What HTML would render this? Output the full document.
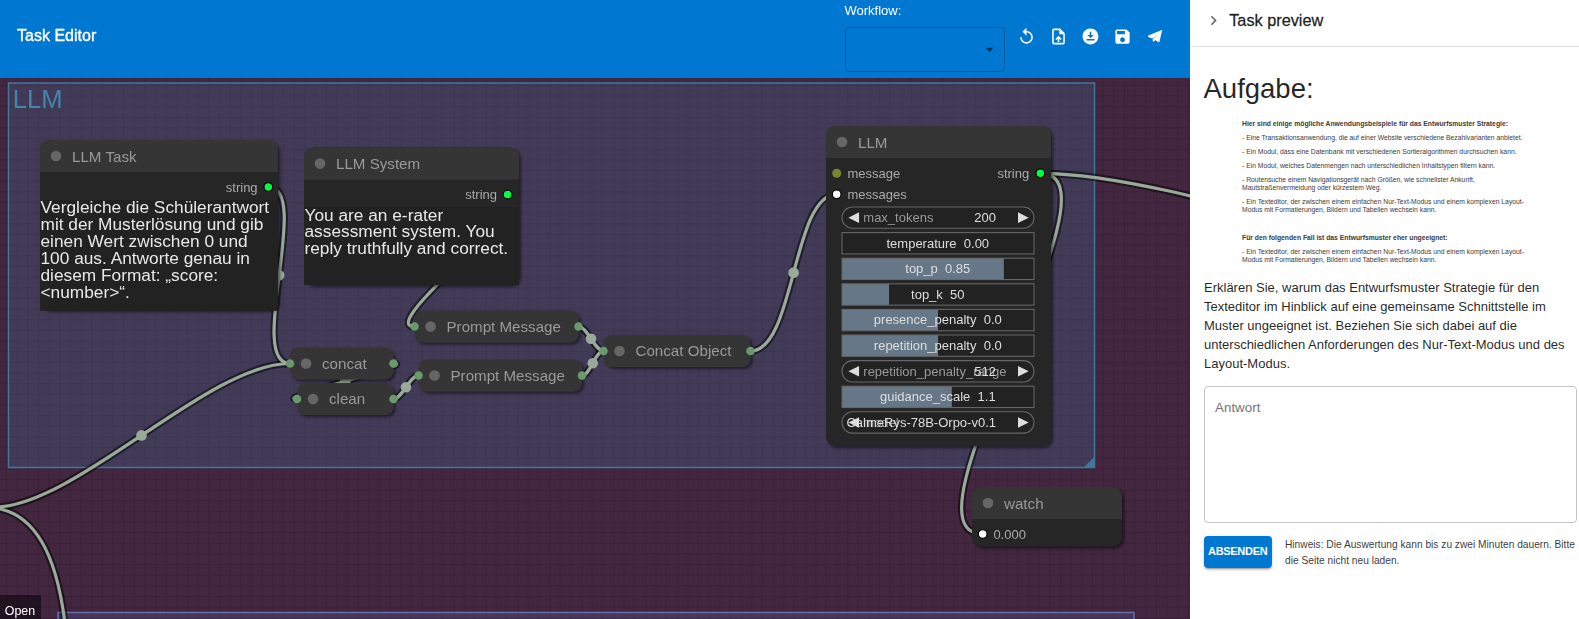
<!DOCTYPE html>
<html><head><meta charset="utf-8"><style>
*{box-sizing:border-box}
html,body{margin:0;padding:0}
body{width:1579px;height:619px;overflow:hidden;position:relative;font-family:"Liberation Sans",sans-serif;background:#fff}
#cv{position:absolute;left:0;top:0;width:1190px;height:619px}
#cv text{font-family:"Liberation Sans",sans-serif}
#hdr{position:absolute;left:0;top:0;width:1190px;height:78px;background:#0077d0;color:#fff}
#panel{position:absolute;left:1190px;top:0;width:389px;height:619px;background:#fff;color:rgba(0,0,0,0.87)}
.ab{position:absolute;white-space:nowrap}
#cv,#hdr{will-change:transform}
</style></head><body>
<svg id="cv" width="1190" height="619" viewBox="0 0 1190 619">
<defs>
<pattern id="grid" patternUnits="userSpaceOnUse" x="5.75" y="10.25" width="10.65" height="10.65">
<rect x="0" y="0" width="1.2" height="10.65" fill="#3b2037" fill-opacity="0.9"/>
<rect x="0" y="0" width="10.65" height="1.2" fill="#3b2037" fill-opacity="0.9"/>
</pattern>
<pattern id="grid2" patternUnits="userSpaceOnUse" x="4.7" y="9.4" width="10.66" height="10.66">
<rect x="0" y="0" width="1.2" height="10.66" fill="#000" fill-opacity="0.07"/>
<rect x="0" y="0" width="10.66" height="1.2" fill="#000" fill-opacity="0.07"/>
</pattern>
<filter id="sh" x="-10%" y="-10%" width="130%" height="140%">
<feDropShadow dx="2.13" dy="2.13" stdDeviation="1.6" flood-color="#000" flood-opacity="0.5"/>
</filter>
</defs>
<rect x="0" y="0" width="1190" height="619" fill="#432740"/>
<rect x="0" y="0" width="1190" height="619" fill="url(#grid)"/>
<rect x="8.5" y="83" width="1086" height="384.5" fill="#3f789e" fill-opacity="0.25"/>
<rect x="8.5" y="83" width="1086" height="384.5" fill="none" stroke="#3f789e" stroke-width="1.5"/>
<path d="M1094.5,467.5 L1083.83,467.5 L1094.5,456.83Z" fill="#3f789e"/>
<text x="12.77" y="107.6" font-size="25.6" fill="#4584ad">LLM</text>
<rect x="58" y="612.5" width="1076" height="40" fill="#5f6fae" fill-opacity="0.22"/>
<rect x="58" y="612.5" width="1076" height="40" fill="none" stroke="#5f6fae" stroke-width="1.5"/>
<path d="M1134,652.5 L1123.33,652.5 L1134,641.83Z" fill="#5f6fae"/>
<path d="M268.30,187.00 C312.76,187.00 245.54,363.50 290.00,363.50" fill="none" stroke="#000" stroke-opacity="0.5" stroke-width="7.47" stroke-linejoin="round"/>
<path d="M508.00,194.60 C548.42,194.60 374.08,326.50 414.50,326.50" fill="none" stroke="#000" stroke-opacity="0.5" stroke-width="7.47" stroke-linejoin="round"/>
<path d="M578.50,326.50 C587.25,326.50 594.75,351.00 603.50,351.00" fill="none" stroke="#000" stroke-opacity="0.5" stroke-width="7.47" stroke-linejoin="round"/>
<path d="M582.00,375.50 C590.15,375.50 595.35,351.00 603.50,351.00" fill="none" stroke="#000" stroke-opacity="0.5" stroke-width="7.47" stroke-linejoin="round"/>
<path d="M393.50,399.00 C402.08,399.00 409.92,375.50 418.50,375.50" fill="none" stroke="#000" stroke-opacity="0.5" stroke-width="7.47" stroke-linejoin="round"/>
<path d="M393.50,363.50 C419.21,363.50 271.29,399.00 297.00,399.00" fill="none" stroke="#000" stroke-opacity="0.5" stroke-width="7.47" stroke-linejoin="round"/>
<path d="M750.50,351.00 C795.21,351.00 791.99,194.30 836.70,194.30" fill="none" stroke="#000" stroke-opacity="0.5" stroke-width="7.47" stroke-linejoin="round"/>
<path d="M1040.30,173.30 C1131.62,173.30 891.38,534.00 982.70,534.00" fill="none" stroke="#000" stroke-opacity="0.5" stroke-width="7.47" stroke-linejoin="round"/>
<path d="M1040.30,173.30 C1186.91,173.30 1468.39,290.00 1615.00,290.00" fill="none" stroke="#000" stroke-opacity="0.5" stroke-width="7.47" stroke-linejoin="round"/>
<path d="M-7.00,507.30 C75.50,507.30 207.50,363.50 290.00,363.50" fill="none" stroke="#000" stroke-opacity="0.5" stroke-width="7.47" stroke-linejoin="round"/>
<path d="M-15.00,507.30 C189.19,507.30 -68.19,1310.00 136.00,1310.00" fill="none" stroke="#000" stroke-opacity="0.5" stroke-width="7.47" stroke-linejoin="round"/>
<path d="M268.30,187.00 C312.76,187.00 245.54,363.50 290.00,363.50" fill="none" stroke="#9a9" stroke-width="3.2"/>
<circle cx="279.15" cy="275.25" r="5.33" fill="#9a9"/>
<path d="M508.00,194.60 C548.42,194.60 374.08,326.50 414.50,326.50" fill="none" stroke="#9a9" stroke-width="3.2"/>
<circle cx="461.25" cy="260.55" r="5.33" fill="#9a9"/>
<path d="M578.50,326.50 C587.25,326.50 594.75,351.00 603.50,351.00" fill="none" stroke="#9a9" stroke-width="3.2"/>
<circle cx="591.00" cy="338.75" r="5.33" fill="#9a9"/>
<path d="M582.00,375.50 C590.15,375.50 595.35,351.00 603.50,351.00" fill="none" stroke="#9a9" stroke-width="3.2"/>
<circle cx="592.75" cy="363.25" r="5.33" fill="#9a9"/>
<path d="M393.50,399.00 C402.08,399.00 409.92,375.50 418.50,375.50" fill="none" stroke="#9a9" stroke-width="3.2"/>
<circle cx="406.00" cy="387.25" r="5.33" fill="#9a9"/>
<path d="M393.50,363.50 C419.21,363.50 271.29,399.00 297.00,399.00" fill="none" stroke="#9a9" stroke-width="3.2"/>
<circle cx="345.25" cy="381.25" r="5.33" fill="#9a9"/>
<path d="M750.50,351.00 C795.21,351.00 791.99,194.30 836.70,194.30" fill="none" stroke="#9a9" stroke-width="3.2"/>
<circle cx="793.60" cy="272.65" r="5.33" fill="#9a9"/>
<path d="M1040.30,173.30 C1131.62,173.30 891.38,534.00 982.70,534.00" fill="none" stroke="#9a9" stroke-width="3.2"/>
<circle cx="1011.50" cy="353.65" r="5.33" fill="#9a9"/>
<path d="M1040.30,173.30 C1186.91,173.30 1468.39,290.00 1615.00,290.00" fill="none" stroke="#9a9" stroke-width="3.2"/>
<circle cx="1327.65" cy="231.65" r="5.33" fill="#9a9"/>
<path d="M-7.00,507.30 C75.50,507.30 207.50,363.50 290.00,363.50" fill="none" stroke="#9a9" stroke-width="3.2"/>
<circle cx="141.50" cy="435.40" r="5.33" fill="#9a9"/>
<path d="M-15.00,507.30 C189.19,507.30 -68.19,1310.00 136.00,1310.00" fill="none" stroke="#9a9" stroke-width="3.2"/>
<circle cx="60.50" cy="908.65" r="5.33" fill="#9a9"/>
<g filter="url(#sh)"><rect x="40" y="140" width="238" height="170" rx="9.20" fill="#262626"/></g>
<path d="M40,172 L40,149.2 A9.2,9.2 0 0 1 49.2,140 L268.8,140 A9.2,9.2 0 0 1 278,149.2 L278,172Z" fill="#353535"/>
<circle cx="56" cy="156" r="5.33" fill="#666"/>
<text x="72" y="162.1" font-size="15.15" fill="#999">LLM Task</text>
<circle cx="268.3" cy="187" r="4.3" fill="#00ff40" stroke="#000" stroke-width="1.1"/>
<text x="257.6" y="192.2" font-size="13" fill="#aaa" text-anchor="end">string</text>
<rect x="40" y="200" width="238" height="110.8" fill="#222"/>
<text x="40.5" y="213" font-size="17.3" fill="#e8e8e8">Vergleiche die Schülerantwort</text>
<text x="40.5" y="230" font-size="17.3" fill="#e8e8e8">mit der Musterlösung und gib</text>
<text x="40.5" y="247" font-size="17.3" fill="#e8e8e8">einen Wert zwischen 0 und</text>
<text x="40.5" y="264" font-size="17.3" fill="#e8e8e8">100 aus. Antworte genau in</text>
<text x="40.5" y="281" font-size="17.3" fill="#e8e8e8">diesem Format: „score:</text>
<text x="40.5" y="298" font-size="17.3" fill="#e8e8e8">&lt;number&gt;“.</text>
<g filter="url(#sh)"><rect x="304" y="147.6" width="215" height="137.4" rx="9.20" fill="#262626"/></g>
<path d="M304,179.6 L304,156.79999999999998 A9.2,9.2 0 0 1 313.2,147.6 L509.8,147.6 A9.2,9.2 0 0 1 519,156.79999999999998 L519,179.6Z" fill="#353535"/>
<circle cx="320" cy="163.6" r="5.33" fill="#666"/>
<text x="336" y="168.79999999999998" font-size="15.15" fill="#999">LLM System</text>
<circle cx="507.6" cy="194.6" r="4.3" fill="#00ff40" stroke="#000" stroke-width="1.1"/>
<text x="497" y="198.9" font-size="13" fill="#aaa" text-anchor="end">string</text>
<rect x="304" y="207" width="215" height="78" fill="#222"/>
<text x="304.5" y="220.7" font-size="17.3" fill="#e8e8e8">You are an e-rater</text>
<text x="304.5" y="237.39999999999998" font-size="17.3" fill="#e8e8e8">assessment system. You</text>
<text x="304.5" y="254.1" font-size="17.3" fill="#e8e8e8">reply truthfully and correct.</text>
<g filter="url(#sh)"><rect x="290" y="347.5" width="103.5" height="32" rx="8.53" fill="#353535"/></g>
<circle cx="306" cy="363.5" r="5.33" fill="#666"/>
<text x="322" y="368.7" font-size="15.15" fill="#999">concat</text>
<circle cx="290" cy="363.5" r="4.27" fill="#6a9a6c"/>
<circle cx="393.5" cy="363.5" r="4.27" fill="#6a9a6c"/>
<g filter="url(#sh)"><rect x="297" y="383" width="96.5" height="32" rx="8.53" fill="#353535"/></g>
<circle cx="313" cy="399" r="5.33" fill="#666"/>
<text x="329" y="404.2" font-size="15.15" fill="#999">clean</text>
<circle cx="297" cy="399" r="4.27" fill="#6a9a6c"/>
<circle cx="393.5" cy="399" r="4.27" fill="#6a9a6c"/>
<g filter="url(#sh)"><rect x="414.5" y="310.5" width="164" height="32" rx="8.53" fill="#353535"/></g>
<circle cx="430.5" cy="326.5" r="5.33" fill="#666"/>
<text x="446.5" y="331.7" font-size="15.15" fill="#999">Prompt Message</text>
<circle cx="414.5" cy="326.5" r="4.27" fill="#6a9a6c"/>
<circle cx="578.5" cy="326.5" r="4.27" fill="#6a9a6c"/>
<g filter="url(#sh)"><rect x="418.5" y="359.5" width="163.5" height="32" rx="8.53" fill="#353535"/></g>
<circle cx="434.5" cy="375.5" r="5.33" fill="#666"/>
<text x="450.5" y="380.7" font-size="15.15" fill="#999">Prompt Message</text>
<circle cx="418.5" cy="375.5" r="4.27" fill="#6a9a6c"/>
<circle cx="582.0" cy="375.5" r="4.27" fill="#6a9a6c"/>
<g filter="url(#sh)"><rect x="603.5" y="335" width="147" height="32" rx="8.53" fill="#353535"/></g>
<circle cx="619.5" cy="351" r="5.33" fill="#666"/>
<text x="635.5" y="356.2" font-size="15.15" fill="#999">Concat Object</text>
<circle cx="603.5" cy="351" r="4.27" fill="#6a9a6c"/>
<circle cx="750.5" cy="351" r="4.27" fill="#6a9a6c"/>
<g filter="url(#sh)"><rect x="826" y="126" width="225" height="320" rx="9.20" fill="#262626"/></g>
<path d="M826,158 L826,135.2 A9.2,9.2 0 0 1 835.2,126 L1041.8,126 A9.2,9.2 0 0 1 1051,135.2 L1051,158Z" fill="#353535"/>
<circle cx="842" cy="142" r="5.33" fill="#666"/>
<text x="858" y="148.1" font-size="15.15" fill="#999">LLM</text>
<circle cx="836.7" cy="173.2" r="4.5" fill="#7a862a"/>
<text x="847.4" y="177.5" font-size="13" fill="#aaa">message</text>
<circle cx="836.7" cy="194.3" r="4.3" fill="#fff" stroke="#000" stroke-width="1.1"/>
<text x="847.4" y="198.6" font-size="13" fill="#aaa">messages</text>
<circle cx="1040.3" cy="173.3" r="4.3" fill="#00ff40" stroke="#000" stroke-width="1.1"/>
<text x="1029.2" y="177.5" font-size="13" fill="#aaa" text-anchor="end">string</text>
<rect x="842" y="207.0" width="192" height="21.33" rx="10.665" fill="#222" stroke="#666" stroke-width="1.07"/>
<path d="M859.07,212.33 L848.40,217.66 L859.07,223.00Z" fill="#ddd"/>
<path d="M1018.01,212.33 L1028.67,217.66 L1018.01,223.00Z" fill="#ddd"/>
<text x="863.3" y="221.93" font-size="13" fill="#999">max_tokens</text>
<text x="996" y="221.93" font-size="13" fill="#ddd" text-anchor="end">200</text>
<rect x="842" y="232.6" width="192" height="21.33" fill="#222"/>
<rect x="842" y="232.6" width="192" height="21.33" fill="none" stroke="#666" stroke-width="1.07"/>
<text x="937.8" y="247.53" font-size="13" fill="#ddd" text-anchor="middle" xml:space="preserve">temperature  0.00</text>
<rect x="842" y="258.2" width="192" height="21.33" fill="#222"/>
<rect x="842" y="258.2" width="161.86" height="21.33" fill="#678"/>
<rect x="842" y="258.2" width="192" height="21.33" fill="none" stroke="#666" stroke-width="1.07"/>
<text x="937.8" y="273.13" font-size="13" fill="#ddd" text-anchor="middle" xml:space="preserve">top_p  0.85</text>
<rect x="842" y="283.8" width="192" height="21.33" fill="#222"/>
<rect x="842" y="283.8" width="47.04" height="21.33" fill="#678"/>
<rect x="842" y="283.8" width="192" height="21.33" fill="none" stroke="#666" stroke-width="1.07"/>
<text x="937.8" y="298.73" font-size="13" fill="#ddd" text-anchor="middle" xml:space="preserve">top_k  50</text>
<rect x="842" y="309.4" width="192" height="21.33" fill="#222"/>
<rect x="842" y="309.4" width="96.00" height="21.33" fill="#678"/>
<rect x="842" y="309.4" width="192" height="21.33" fill="none" stroke="#666" stroke-width="1.07"/>
<text x="937.8" y="324.33" font-size="13" fill="#ddd" text-anchor="middle" xml:space="preserve">presence_penalty  0.0</text>
<rect x="842" y="335.0" width="192" height="21.33" fill="#222"/>
<rect x="842" y="335.0" width="96.00" height="21.33" fill="#678"/>
<rect x="842" y="335.0" width="192" height="21.33" fill="none" stroke="#666" stroke-width="1.07"/>
<text x="937.8" y="349.93" font-size="13" fill="#ddd" text-anchor="middle" xml:space="preserve">repetition_penalty  0.0</text>
<rect x="842" y="360.6" width="192" height="21.33" rx="10.665" fill="#222" stroke="#666" stroke-width="1.07"/>
<path d="M859.07,365.93 L848.40,371.27 L859.07,376.60Z" fill="#ddd"/>
<path d="M1018.01,365.93 L1028.67,371.27 L1018.01,376.60Z" fill="#ddd"/>
<text x="863.3" y="375.53" font-size="13" fill="#999">repetition_penalty_range</text>
<text x="996" y="375.53" font-size="13" fill="#ddd" text-anchor="end">512</text>
<rect x="842" y="386.20000000000005" width="192" height="21.33" fill="#222"/>
<rect x="842" y="386.20000000000005" width="109.82" height="21.33" fill="#678"/>
<rect x="842" y="386.20000000000005" width="192" height="21.33" fill="none" stroke="#666" stroke-width="1.07"/>
<text x="937.8" y="401.13" font-size="13" fill="#ddd" text-anchor="middle" xml:space="preserve">guidance_scale  1.1</text>
<rect x="842" y="411.8" width="192" height="21.33" rx="10.665" fill="#222" stroke="#666" stroke-width="1.07"/>
<path d="M859.07,417.13 L848.40,422.47 L859.07,427.80Z" fill="#ddd"/>
<path d="M1018.01,417.13 L1028.67,422.47 L1018.01,427.80Z" fill="#ddd"/>
<text x="863.3" y="426.73" font-size="13" fill="#999">model</text>
<text x="996" y="426.73" font-size="13" fill="#ddd" text-anchor="end">CalmeRys-78B-Orpo-v0.1</text>
<g filter="url(#sh)"><rect x="972" y="487" width="150" height="59.5" rx="9.20" fill="#262626"/></g>
<path d="M972,519 L972,496.2 A9.2,9.2 0 0 1 981.2,487 L1112.8,487 A9.2,9.2 0 0 1 1122,496.2 L1122,519Z" fill="#353535"/>
<circle cx="988" cy="503" r="5.33" fill="#666"/>
<text x="1004" y="509.1" font-size="15.15" fill="#999">watch</text>
<circle cx="982.7" cy="534" r="4.3" fill="#fff" stroke="#000" stroke-width="1.1"/>
<text x="993.4" y="539.3" font-size="13" fill="#aaa">0.000</text>
<rect x="0" y="595" width="41" height="24" fill="#000" fill-opacity="0.5"/>
<text x="4.8" y="614.6" font-size="12.4" fill="#fff">Open</text>
</svg>
<div id="hdr">
 <div class="ab" style="left:17.1px;top:27px;font-size:16px;line-height:18px;-webkit-text-stroke:0.35px #fff">Task Editor</div>
 <div class="ab" style="left:844.5px;top:3px;font-size:13px;line-height:16px">Workflow:</div>
 <div class="ab" style="left:845px;top:27px;width:160px;height:44.5px;border:1px solid rgba(0,0,0,0.25);border-radius:4px"></div>
 <svg class="ab" style="left:985px;top:47px" width="9" height="6" viewBox="0 0 9 6"><path d="M0.8,0.8 L8.2,0.8 L4.5,5.2Z" fill="rgba(0,0,0,0.55)"/></svg>
 <svg class="ab" style="left:1017.1px;top:27px" width="19" height="19" viewBox="0 0 24 24"><path fill="#fff" d="M12 5V1L7 6l5 5V7c3.31 0 6 2.69 6 6s-2.69 6-6 6-6-2.69-6-6H4c0 4.42 3.58 8 8 8s8-3.58 8-8-3.58-8-8-8z"/></svg>
 <svg class="ab" style="left:1049px;top:27px" width="19" height="19" viewBox="0 0 24 24"><path fill="#fff" d="M14 2H6c-1.1 0-1.99.9-1.99 2L4 20c0 1.1.89 2 1.99 2H18c1.1 0 2-.9 2-2V8l-6-6zm4 18H6V4h7v5h5v11zM8 15.01l1.41 1.41L11 14.84V19h2v-4.16l1.59 1.59L16 15.01 12.01 11 8 15.01z"/></svg>
 <svg class="ab" style="left:1081px;top:26.8px" width="19" height="19" viewBox="0 0 24 24"><path fill="#fff" d="M12 2C6.49 2 2 6.49 2 12s4.49 10 10 10 10-4.49 10-10S17.51 2 12 2zm-1 8V6h2v4h3l-4 4-4-4h3zm6 7H7v-2h10v2z"/></svg>
 <svg class="ab" style="left:1113px;top:27px" width="19" height="19" viewBox="0 0 24 24"><path fill="#fff" d="M17 3H5c-1.11 0-2 .9-2 2v14c0 1.1.89 2 2 2h14c1.1 0 2-.9 2-2V7l-4-4zm-5 16c-1.66 0-3-1.34-3-3s1.34-3 3-3 3 1.34 3 3-1.34 3-3 3zm3-10H5V5h10v4z"/></svg>
 <svg class="ab" style="left:1140px;top:24px" width="30" height="24" viewBox="0 0 30 24"><g fill="#fff" stroke="#fff" stroke-width="0.9" stroke-linejoin="round"><path d="M21.6,6.6 L8.2,12 L9.6,13.3 L12.6,13.9 L19.6,8.8Z"/><path d="M21.6,6.6 L13.2,15.2 L13.2,17.2 L15.6,15.8 L18.9,18Z"/></g></svg>
</div>
<div id="panel">
<svg class="ab" style="left:13.8px;top:11px" width="19" height="19" viewBox="0 0 24 24"><path fill="rgba(0,0,0,0.6)" d="M10 6 8.59 7.41 13.17 12l-4.58 4.59L10 18l6-6z"/></svg>
<div class="ab" style="left:39.2px;top:10.5px;font-size:16.3px;line-height:18px;-webkit-text-stroke:0.3px rgba(0,0,0,0.87)">Task preview</div>
<div class="ab" style="left:1px;top:46px;width:388px;height:1px;background:#e0e0e0"></div>
<div class="ab" style="left:13.5px;top:73px;font-size:27.5px;line-height:32px">Aufgabe:</div>
<div class="ab" style="left:52px;top:120px;font-size:6.77px;color:#3a3a3a;line-height:8px">
 <div class="ab" style="top:0px;font-weight:bold">Hier sind einige mögliche Anwendungsbeispiele für das Entwurfsmuster Strategie:</div>
 <div class="ab" style="top:14px">- Eine Transaktionsanwendung, die auf einer Website verschiedene Bezahlvarianten anbietet.</div>
 <div class="ab" style="top:28px">- Ein Modul, dass eine Datenbank mit verschiedenen Sortieralgorithmen durchsuchen kann.</div>
 <div class="ab" style="top:42px">- Ein Modul, welches Datenmengen nach unterschiedlichen Inhaltstypen filtern kann.</div>
 <div class="ab" style="top:56px">- Routensuche einem Navigationsgerät nach Größen, wie schnellster Ankunft,</div>
 <div class="ab" style="top:64px">Mautstraßenvermeidung oder kürzestem Weg.</div>
 <div class="ab" style="top:78px">- Ein Texteditor, der zwischen einem einfachen Nur-Text-Modus und einem komplexen Layout-</div>
 <div class="ab" style="top:86px">Modus mit Formatierungen, Bildern und Tabellen wechseln kann.</div>
 <div class="ab" style="top:114px;font-weight:bold">Für den folgenden Fall ist das Entwurfsmuster eher ungeeignet:</div>
 <div class="ab" style="top:128px">- Ein Texteditor, der zwischen einem einfachen Nur-Text-Modus und einem komplexen Layout-</div>
 <div class="ab" style="top:136px">Modus mit Formatierungen, Bildern und Tabellen wechseln kann.</div>
</div>
<div class="ab" style="left:14px;top:278px;font-size:13px;line-height:19px">Erklären Sie, warum das Entwurfsmuster Strategie für den<br>Texteditor im Hinblick auf eine gemeinsame Schnittstelle im<br>Muster ungeeignet ist. Beziehen Sie sich dabei auf die<br>unterschiedlichen Anforderungen des Nur-Text-Modus und des<br>Layout-Modus.</div>
<div class="ab" style="left:14px;top:386px;width:373px;height:136.5px;border:1px solid #c4c4c4;border-radius:4px"></div>
<div class="ab" style="left:25px;top:400px;font-size:13.4px;line-height:16px;color:#757575">Antwort</div>
<div class="ab" style="left:14px;top:536px;width:68px;height:32px;background:#0077d0;border-radius:4px;box-shadow:0 3px 1px -2px rgba(0,0,0,0.2),0 2px 2px 0 rgba(0,0,0,0.14),0 1px 5px 0 rgba(0,0,0,0.12)"></div>
<div class="ab" style="left:18px;top:545px;font-size:11px;font-weight:bold;letter-spacing:-0.3px;line-height:12px;color:#fff">ABSENDEN</div>
<div class="ab" style="left:95px;top:536.5px;font-size:10.2px;line-height:16px;color:rgba(0,0,0,0.8)">Hinweis: Die Auswertung kann bis zu zwei Minuten dauern. Bitte<br>die Seite nicht neu laden.</div>

</div>
</body></html>
